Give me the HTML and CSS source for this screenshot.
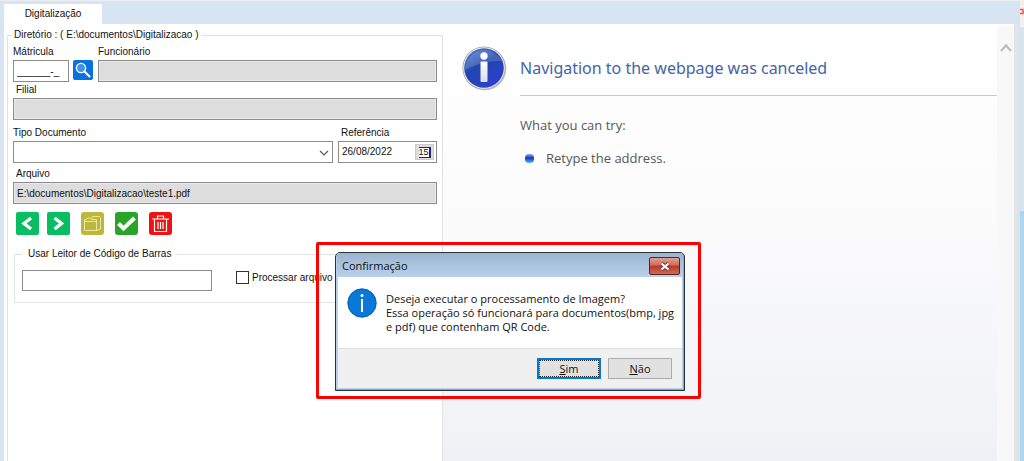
FILE: index.html
```html
<!DOCTYPE html>
<html lang="pt-BR">
<head>
<meta charset="utf-8">
<title>Digitalização</title>
<link rel="stylesheet" href="styles.css">
</head>
<body>
<div class="app">
  <main class="window">
    <nav class="tabs"><button class="tab" type="button">Digitalização</button></nav>
    <div class="panes">
      <form class="form">
        <fieldset class="group main-group">
          <legend class="main-legend">Diretório : ( E:\documentos\Digitalizacao )</legend>
          <div class="row first">
            <div class="field matricula">
              <label for="mat">Mátricula</label>
              <input class="box" id="mat" type="text" value="______-_">
            </div>
            <button class="search" type="button" aria-label="Pesquisar">
              <svg viewBox="0 0 20 20"><rect width="20" height="20" rx="2" fill="#0a72e0"/><circle cx="8" cy="8" r="4.6" fill="#3f95ee" stroke="#fff" stroke-width="1.4"/><path d="M11.5 11.5l5 5" stroke="#fff" stroke-width="2" stroke-linecap="round"/></svg>
            </button>
            <div class="field grow">
              <label for="func">Funcionário</label>
              <input class="box off" id="func" type="text" readonly>
            </div>
          </div>
          <div class="field filial">
            <label class="inset" for="filial">Filial</label>
            <input class="box off" id="filial" type="text" readonly>
          </div>
          <div class="row third">
            <div class="field grow">
              <label for="tipo">Tipo Documento</label>
              <div class="select-wrap">
                <select class="box" id="tipo"><option></option></select>
                <svg class="caret" viewBox="0 0 10 6"><path d="M1 1l4 4 4-4" fill="none" stroke="#555" stroke-width="1.1"/></svg>
              </div>
            </div>
            <div class="field ref">
              <label class="inset" for="ref">Referência</label>
              <div class="box date">
                <input id="ref" type="text" value="26/08/2022">
                <button type="button" class="cal" aria-label="Calendário"><span>15</span></button>
              </div>
            </div>
          </div>
          <div class="field">
            <label class="inset" for="arq">Arquivo</label>
            <input class="box off" id="arq" type="text" value="E:\documentos\Digitalizacao\teste1.pdf" readonly>
          </div>
          <div class="tools">
            <div class="pair">
              <button type="button" aria-label="Anterior"><svg viewBox="0 0 23 23"><rect width="23" height="23" rx="2" fill="#08bd62"/><path d="M15 6l-7 5.500 7 5.500" fill="none" stroke="#fff" stroke-width="3.400"/></svg></button>
              <button type="button" aria-label="Próximo"><svg viewBox="0 0 23 23"><rect width="23" height="23" rx="2" fill="#08bd62"/><path d="M7.500 6l7 5.500-7 5.500" fill="none" stroke="#fff" stroke-width="3.400"/></svg></button>
            </div>
            <button type="button" aria-label="Abrir pasta"><svg viewBox="0 0 23 23"><rect width="23" height="23" rx="3" fill="#bdb83c"/><path d="M3.500 18.500V7.500h2l1-1.500h3l1 1.500h5v11zM15.500 18.500l4-1.500V5.500l-1-1H11.500l-1 2M3.500 9.500h12" fill="none" stroke="#e9e6a5" stroke-width="1"/></svg></button>
            <button type="button" aria-label="Confirmar"><svg viewBox="0 0 23 23"><rect width="23" height="23" rx="3" fill="#28a428"/><path d="M3.500 11.500l5 5L19.500 6" fill="none" stroke="#fff" stroke-width="4"/></svg></button>
            <button type="button" aria-label="Excluir"><svg viewBox="0 0 23 23"><rect width="23" height="23" rx="3" fill="#ee1212"/><path d="M3 7h17M8.500 6.500V4h6v2.500M5.500 7.500v12h12v-12M9 10v7M11.500 10v7M14 10v7" fill="none" stroke="#fff" stroke-width="1.2"/></svg></button>
          </div>
          <fieldset class="group reader">
            <legend class="reader-legend">Usar Leitor de Código de Barras</legend>
            <div class="reader-row">
              <input class="box code" type="text" aria-label="Código de barras">
              <label class="check"><input type="checkbox">Processar arquivo</label>
            </div>
          </fieldset>
        </fieldset>
      </form>
      <section class="browser">
        <div class="page">
          <svg class="info" viewBox="0 0 46 46">
            <defs><linearGradient id="ball" x1="0" y1="0" x2="0.6" y2="1"><stop offset="0" stop-color="#5d83d6"/><stop offset="0.5" stop-color="#2146ad"/><stop offset="1" stop-color="#2c40cd"/></linearGradient>
            <linearGradient id="stem" x1="0" y1="0" x2="0" y2="1"><stop offset="0" stop-color="#fff"/><stop offset="1" stop-color="#d9dcea"/></linearGradient></defs>
            <circle cx="22.800" cy="22.800" r="21.500" fill="#c4c4c4"/><circle cx="22" cy="22" r="21.500" fill="#999"/><circle cx="22" cy="22" r="20.800" fill="#f2f2f2"/><circle cx="22" cy="22" r="19.800" fill="url(#ball)"/>
            <path d="M3 24A19.500 19.500 0 0 1 40 15Q20 14 3 24z" fill="#fff" opacity=".16"/>
            <circle cx="22" cy="10" r="3.700" fill="#fff"/><rect x="18.500" y="15.500" width="7" height="20.500" rx="1" fill="url(#stem)"/>
          </svg>
          <div class="copy">
            <h1>Navigation to the webpage was canceled</h1>
            <p>What you can try:</p>
            <ul><li>Retype the address.</li></ul>
          </div>
        </div>
        <div class="scroll"><svg viewBox="0 0 12 9"><path d="M1 8l5-5.500L11 8" fill="none" stroke="#bdbdbd" stroke-width="2.200"/></svg></div>
      </section>
    </div>
  </main>
  <aside class="edge">
    <div class="edge-top"><svg viewBox="0 0 4 8"><path d="M0 1.500h3v4H0M3 4h1" fill="none" stroke="#f05050" stroke-width="1.300"/></svg></div>
    <div class="edge-mid"></div>
    <div class="edge-low"></div>
  </aside>
  <div class="marker">
    <div class="dialog" role="dialog" aria-labelledby="dlg-title">
      <header class="title">
        <span id="dlg-title">Confirmação</span>
        <button class="close" type="button" aria-label="Fechar"><svg viewBox="0 0 12 9"><path d="M2.500 1.500l7 6M9.500 1.500l-7 6" stroke="#6b3a38" stroke-width="4"/><path d="M2.500 1.500l7 6M9.500 1.500l-7 6" stroke="#fff" stroke-width="2.200"/></svg></button>
      </header>
      <div class="message">
        <svg viewBox="0 0 30 30"><circle cx="15" cy="15" r="14.500" fill="#0a78d6"/><circle cx="15" cy="15" r="14" fill="none" stroke="#0b62b0"/><circle cx="15" cy="7.500" r="1.500" fill="#fff"/><path d="M15 11v13" stroke="#fff" stroke-width="2"/></svg>
        <p>Deseja executar o processamento de Imagem?<br>Essa operação só funcionará para documentos(bmp, jpg<br>e pdf) que contenham QR Code.</p>
      </div>
      <footer class="actions">
        <button class="btn primary" type="button"><u>S</u>im</button>
        <button class="btn" type="button"><u>N</u>ão</button>
      </footer>
    </div>
  </div>
</div>
</body>
</html>
```

FILE: styles.css
```css
* { box-sizing: border-box; }
body { margin: 0; font: 10px/12px "Liberation Sans", Arial, sans-serif; color: #111; }
button, input, select { font: inherit; color: inherit; margin: 0; padding: 0; }
svg { display: block; }
.app { position: relative; display: flex; min-height: 100vh; overflow: hidden; background: #d7e4f1; }
.window { flex: 1; display: flex; flex-direction: column; min-width: 0; border-top: 1px solid #eceff2; padding: 0 3px 0 4px; }
.tabs { display: flex; padding-top: 3px; }
.tab { border: 0; background: #fff; width: 98px; height: 20px; }
.panes { flex: 1; display: flex; background: #fff; border-right: 3px solid #e4e4e4; }
.form { width: 439px; padding: 4px 0 0 3px; display: flex; }
.group { min-width: 0; margin: 0; border: 1px solid #e2e2e2; }
.main-group { flex: 1; border-bottom: 0; padding: 4px 5px 0; }
.main-legend { line-height: 14px; padding: 0 2px 0 1px; }
.row { display: flex; align-items: flex-end; }
.field { display: flex; flex-direction: column; gap: 2px; }
.grow { flex: 1; min-width: 0; }
.matricula { width: 56px; }
.inset { padding-left: 3px; }
.filial { margin: 2px 0 7px; }
.third { gap: 5px; margin-bottom: 5px; }
.ref { width: 99px; }
.box { width: 100%; height: 22px; border: 1px solid #8c8c8c; border-radius: 0; background: #fff; padding: 0 3px; }
.off { background: #ddd; box-shadow: inset 0 0 0 1px #e9e9e9; }
.search { border: 0; background: none; width: 20px; height: 20px; margin: 0 5px 2px 4px; }
.select-wrap { position: relative; }
.select-wrap select { appearance: none; display: block; }
.caret { position: absolute; right: 4px; top: 9px; width: 10px; height: 6px; pointer-events: none; }
.date { display: flex; align-items: center; justify-content: space-between; padding: 0 2px 0 3px; }
.date input { width: 70px; border: 0; outline: 0; background: none; }
.cal { width: 19px; height: 16px; border: 1px solid #ccc; background: #ddd; display: grid; place-items: center; }
.cal span { width: 12px; height: 11px; font: 9px/9px "Liberation Sans", Arial, sans-serif; background: #fff; border: solid #22227a; border-width: 1px 2px 1px 0; text-align: center; }
.tools { display: flex; gap: 11px; padding: 8px 0 0 3px; }
.pair { display: flex; gap: 8px; }
.tools button { width: 23px; height: 23px; border: 0; background: none; }
.reader { margin: 13px 0 0 1px; padding: 10px 7px 11px; }
.reader-legend { padding: 0 6px; }
.reader-row { display: flex; gap: 24px; }
.code { width: 190px; height: 21px; }
.check { display: flex; gap: 3px; height: 15px; align-items: center; white-space: nowrap; }
.check input { appearance: none; width: 13px; height: 13px; border: 1px solid #333; background: #fff; }
.browser { flex: 1; display: flex; min-width: 0; margin-top: 2px; font-family: "Open Sans", sans-serif; background: linear-gradient(#fff, #fbfbfc 45%, #f0f1f6); }
.page { flex: 1; display: flex; align-items: flex-start; padding: 20px 0 0 19px; min-width: 0; }
.info { width: 46px; height: 46px; margin-right: 12px; }
.copy { flex: 1; color: #575757; font-size: 13px; line-height: 20px; }
.copy h1 { margin: 0; font: 400 16px/22px "Noto Sans", "Open Sans", sans-serif; padding: 11px 0 16px; color: #4465a2; border-bottom: 1px solid #c7c9d6; }
.copy p { margin: 19px 0 13px; }
.copy ul { list-style: none; margin: 0; padding: 0; }
.copy li { display: flex; align-items: center; gap: 12px; padding-left: 5px; }
.copy li::before { content: ""; width: 9px; height: 9px; border-radius: 4px; background: linear-gradient(#92a8e8, #1438c0 45%, #4cc0f0); }
.scroll { width: 17px; background: #f8f8f8; display: flex; justify-content: center; align-items: flex-start; padding-top: 17px; }
.scroll svg { width: 12px; height: 9px; }
.edge { width: 4px; display: flex; flex-direction: column; }
.edge-top { height: 27px; background: #f0f0f0; padding-top: 8px; }
.edge-mid { height: 184px; }
.edge-low { flex: 1; background: #aed7ec; }
.marker { position: absolute; left: 316px; top: 242px; width: 385px; border: 3px solid #f00; border-radius: 2px; padding: 7px 13px 5px 16px; }
.dialog { border: 1px solid #26333b; border-radius: 5px 5px 0 0; background: #b9d1ea; padding: 0 1px 2px; box-shadow: inset -1px -1px #35d0e6; font: 11px/14px "Open Sans", sans-serif; overflow: hidden; }
.title { display: flex; justify-content: space-between; align-items: center; height: 24px; padding: 2px 3px 0 5px; background: linear-gradient(#9ab4d1, #b9d1ea); }
.close { width: 31px; height: 18px; border: 1px solid #5b2320; border-radius: 2px; background: linear-gradient(#e0a195, #cf6a58 45%, #b8382a 50%, #cf6a55); display: grid; place-items: center; }
.close svg { width: 12px; height: 9px; }
.message { display: flex; gap: 9px; margin: 0 1px; background: #fff; padding: 11px 9px 13px; border-bottom: 1px solid #dfdfdf; }
.message svg { width: 30px; height: 30px; flex: none; }
.message p { margin: 4px 0 1px; white-space: nowrap; }
.actions { display: flex; justify-content: flex-end; gap: 7px; margin: 0 1px; padding: 9px 10px 9px; background: #f0f0f0; }
.btn { width: 64px; height: 21px; border: 1px solid #adadad; background: #e1e1e1; }
.primary { border: 2px solid #0078d7; outline: 1px dotted #222; outline-offset: -3px; }
```
